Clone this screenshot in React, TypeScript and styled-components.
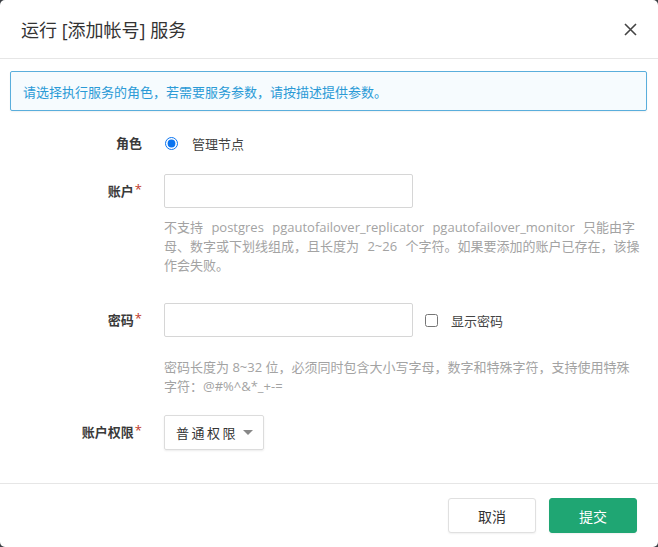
import styled, { createGlobalStyle } from "styled-components";

const GlobalStyle = createGlobalStyle`
  html, body {
    margin: 0;
    padding: 0;
    background: #3b3f44;
  }
  body {
    font-family: "Open Sans", "Noto Sans CJK SC", sans-serif;
  }
`;

const Modal = styled.div`
  width: 658px;
  height: 547px;
  box-sizing: border-box;
  background: #fff;
  border-radius: 5px;
  display: flex;
  flex-direction: column;
  overflow: hidden;
`;

const Header = styled.div`
  height: 59px;
  flex-shrink: 0;
  box-sizing: border-box;
  border-bottom: 1px solid #e6e6e6;
  display: flex;
  align-items: center;
  justify-content: space-between;
  padding: 0 20px 0 21px;
`;

const Title = styled.div`
  font-size: 18px;
  color: #333;
`;

const CloseButton = styled.button`
  border: none;
  background: none;
  padding: 0;
  width: 16px;
  height: 16px;
  display: flex;
  align-items: center;
  justify-content: center;
  cursor: pointer;
`;

const Body = styled.div`
  flex: 1;
  padding: 12px 11px 0 10px;
`;

const Alert = styled.div`
  height: 40px;
  box-sizing: border-box;
  border: 1px solid #5aaedc;
  border-radius: 2px;
  background: #f6fbfe;
  color: #2a9ad6;
  font-size: 13px;
  display: flex;
  align-items: center;
  padding-left: 12px;
  box-shadow: 0 1px 2px rgba(0, 0, 0, 0.06);
`;

const Form = styled.div`
  display: grid;
  grid-template-columns: 132px 1fr;
  column-gap: 22px;
  margin-top: 21px;
`;

const Label = styled.div<{ $top?: number }>`
  font-size: 13px;
  font-weight: 700;
  color: #3a3a3a;
  text-align: right;
  margin-top: ${(p) => p.$top ?? 0}px;
  line-height: 22px;
`;

const Required = styled.span`
  color: #c0392b;
  font-weight: 400;
  margin-left: 1px;
  position: relative;
  top: -2px;
`;

const Field = styled.div<{ $top?: number }>`
  display: flex;
  flex-direction: column;
  margin-top: ${(p) => p.$top ?? 0}px;
`;

const InlineRow = styled.div`
  display: flex;
  align-items: center;
  font-size: 13px;
  color: #444;
  height: 22px;
`;

const Radio = styled.input`
  width: 13px;
  height: 13px;
  margin: 0 14px 0 1px;
  accent-color: #0a74f0;
`;

const TextInput = styled.input`
  width: 249px;
  height: 34px;
  box-sizing: border-box;
  border: 1px solid #d6d6d6;
  border-radius: 2px;
  outline: none;
  font-size: 13px;
  padding: 0 8px;
`;

const Help = styled.div<{ $top: number; $wordSpacing?: number }>`
  font-size: 13px;
  color: #a3a3a3;
  line-height: 19px;
  width: 478px;
  margin-top: ${(p) => p.$top}px;
  word-spacing: ${(p) => p.$wordSpacing ?? 0}px;
`;

const PasswordRow = styled.div`
  display: flex;
  align-items: center;
`;

const CheckLabel = styled.label`
  display: flex;
  align-items: center;
  font-size: 13px;
  color: #444;
  margin-left: 12px;
`;

const Checkbox = styled.input`
  width: 13px;
  height: 13px;
  margin: 0 13px 0 0;
`;

const Select = styled.div`
  width: 100px;
  height: 35px;
  box-sizing: border-box;
  border: 1px solid #dcdcdc;
  border-radius: 2px;
  box-shadow: 0 1px 2px rgba(0, 0, 0, 0.08);
  display: flex;
  align-items: center;
  justify-content: space-between;
  padding: 0 10px 0 11px;
  font-size: 13px;
  color: #333;
  letter-spacing: 2.5px;
`;

const Caret = styled.span`
  width: 0;
  height: 0;
  border-left: 5px solid transparent;
  border-right: 5px solid transparent;
  border-top: 5px solid #888;
`;

const Footer = styled.div`
  height: 63px;
  flex-shrink: 0;
  border-top: 1px solid #e6e6e6;
  display: flex;
  align-items: center;
  justify-content: flex-end;
  gap: 13px;
  padding-right: 21px;
`;

const Button = styled.button<{ $primary?: boolean }>`
  width: 88px;
  height: 35px;
  border-radius: 3px;
  font-size: 14px;
  font-family: "Open Sans", "Noto Sans CJK SC", sans-serif;
  cursor: pointer;
  border: 1px solid ${(p) => (p.$primary ? "#1fa673" : "#e0e0e0")};
  background: ${(p) => (p.$primary ? "#1fa673" : "#fff")};
  color: ${(p) => (p.$primary ? "#fff" : "#333")};
  box-shadow: 0 1px 2px rgba(0, 0, 0, 0.06);
`;

export default function App() {
  return (
    <>
      <GlobalStyle />
      <Modal>
        <Header>
          <Title>运行 [添加帐号] 服务</Title>
          <CloseButton aria-label="关闭">
            <svg width="13" height="13" viewBox="0 0 13 13">
              <path d="M1 1L12 12M12 1L1 12" stroke="#444" strokeWidth="1.6" />
            </svg>
          </CloseButton>
        </Header>
        <Body>
          <Alert>请选择执行服务的角色，若需要服务参数，请按描述提供参数。</Alert>
          <Form>
            <Label>角色</Label>
            <Field>
              <InlineRow>
                <Radio type="radio" defaultChecked name="role" />
                管理节点
              </InlineRow>
            </Field>

            <Label $top={26}>
              账户<Required>*</Required>
            </Label>
            <Field $top={20}>
              <TextInput />
              <Help $top={10} $wordSpacing={5}>
                不支持 postgres pgautofailover_replicator pgautofailover_monitor 只能由字母、数字或下划线组成，且长度为 2~26 个字符。如果要添加的账户已存在，该操作会失败。
              </Help>
            </Field>

            <Label $top={34}>
              密码<Required>*</Required>
            </Label>
            <Field $top={28}>
              <PasswordRow>
                <TextInput type="password" />
                <CheckLabel>
                  <Checkbox type="checkbox" />
                  显示密码
                </CheckLabel>
              </PasswordRow>
              <Help $top={21}>
                密码长度为 8~32 位，必须同时包含大小写字母，数字和特殊字符，支持使用特殊字符：@#%^&*_+-=
              </Help>
            </Field>

            <Label $top={25}>
              账户权限<Required>*</Required>
            </Label>
            <Field $top={19}>
              <Select>
                普通权限
                <Caret />
              </Select>
            </Field>
          </Form>
        </Body>
        <Footer>
          <Button>取消</Button>
          <Button $primary>提交</Button>
        </Footer>
      </Modal>
    </>
  );
}
